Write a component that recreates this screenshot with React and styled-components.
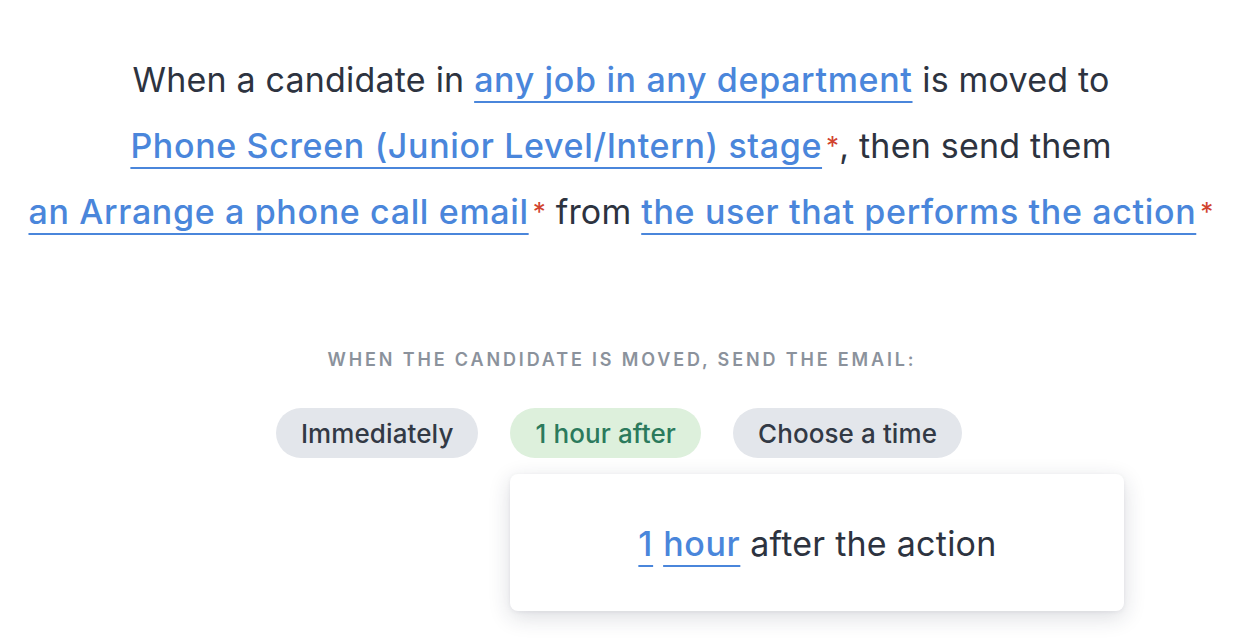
import React from "react";
import styled, { createGlobalStyle } from "styled-components";

const Global = createGlobalStyle`
  html, body { margin: 0; padding: 0; background: #ffffff; }
  body { font-family: Inter, "Noto Sans", sans-serif; -webkit-font-smoothing: antialiased; }
`;

const Page = styled.div`
  width: 1242px;
  height: 638px;
  overflow: hidden;
  display: flex;
  flex-direction: column;
  align-items: center;
  box-sizing: border-box;
  padding-top: 47px;
`;

const Sentence = styled.p`
  margin: 0;
  width: 1236px;
  text-align: center;
  font-size: 34px;
  letter-spacing: 0.2px;
  line-height: 66px;
  color: #2d3340;
  font-weight: 400;
`;

const Link = styled.span`
  color: #4a86db;
  font-weight: 500;
  letter-spacing: 0.65px;
  white-space: nowrap;
  text-decoration: underline;
  text-decoration-thickness: 2px;
  text-underline-offset: 9px;
  text-decoration-color: #4a86db;
`;

const Req = styled.span`
  color: #d1432e;
  font-size: 26px;
  margin-left: 4px;
  vertical-align: 3px;
`;

const Heading = styled.div`
  margin-top: 104px;
  margin-left: 2px;
  font-size: 18px;
  line-height: 22px;
  font-weight: 600;
  letter-spacing: 2.85px;
  text-transform: uppercase;
  color: #8b929c;
`;

const Options = styled.div`
  margin-top: 37px;
  margin-right: 4px;
  display: flex;
  gap: 32px;
`;

const OptionSlot = styled.div`
  position: relative;
`;

const Option = styled.button`
  height: 50px;
  padding: 0 25px;
  border: none;
  border-radius: 25px;
  font-family: inherit;
  font-size: 26px;
  letter-spacing: 0.1px;
  font-weight: 500;
  background: ${(p) => (p.$active ? "#ddf0dc" : "#e3e6eb")};
  color: ${(p) => (p.$active ? "#2b7a5c" : "#323945")};
  cursor: pointer;
`;

const Popover = styled.div`
  position: absolute;
  left: 0;
  top: calc(100% + 16px);
  width: 614px;
  height: 137px;
  background: #fff;
  border-radius: 8px;
  box-shadow: 0 6px 22px rgba(30, 40, 60, 0.16), 0 1px 4px rgba(30, 40, 60, 0.06);
  display: flex;
  align-items: center;
  justify-content: center;
  font-size: 34px;
  letter-spacing: 0.25px;
  color: #2d3340;
  padding-top: 2px;
  box-sizing: border-box;
`;

const Gap = styled.span`
  display: inline-block;
  width: 10px;
`;

export default function App() {
  return (
    <>
      <Global />
      <Page>
        <Sentence>
          When a candidate in <Link>any job in any department</Link> is moved to{" "}
          <Link>Phone Screen (Junior Level/Intern) stage</Link>
          <Req>*</Req>, then send them{" "}
          <Link>an Arrange a phone call email</Link>
          <Req>*</Req> from <Link>the user that performs the action</Link>
          <Req>*</Req>
        </Sentence>
        <Heading>When the candidate is moved, send the email:</Heading>
        <Options>
          <OptionSlot>
            <Option>Immediately</Option>
          </OptionSlot>
          <OptionSlot>
            <Option $active>1 hour after</Option>
            <Popover>
              <span>
                <Link>1</Link>
                <Gap />
                <Link>hour</Link> after the action
              </span>
            </Popover>
          </OptionSlot>
          <OptionSlot>
            <Option>Choose a time</Option>
          </OptionSlot>
        </Options>
      </Page>
    </>
  );
}
